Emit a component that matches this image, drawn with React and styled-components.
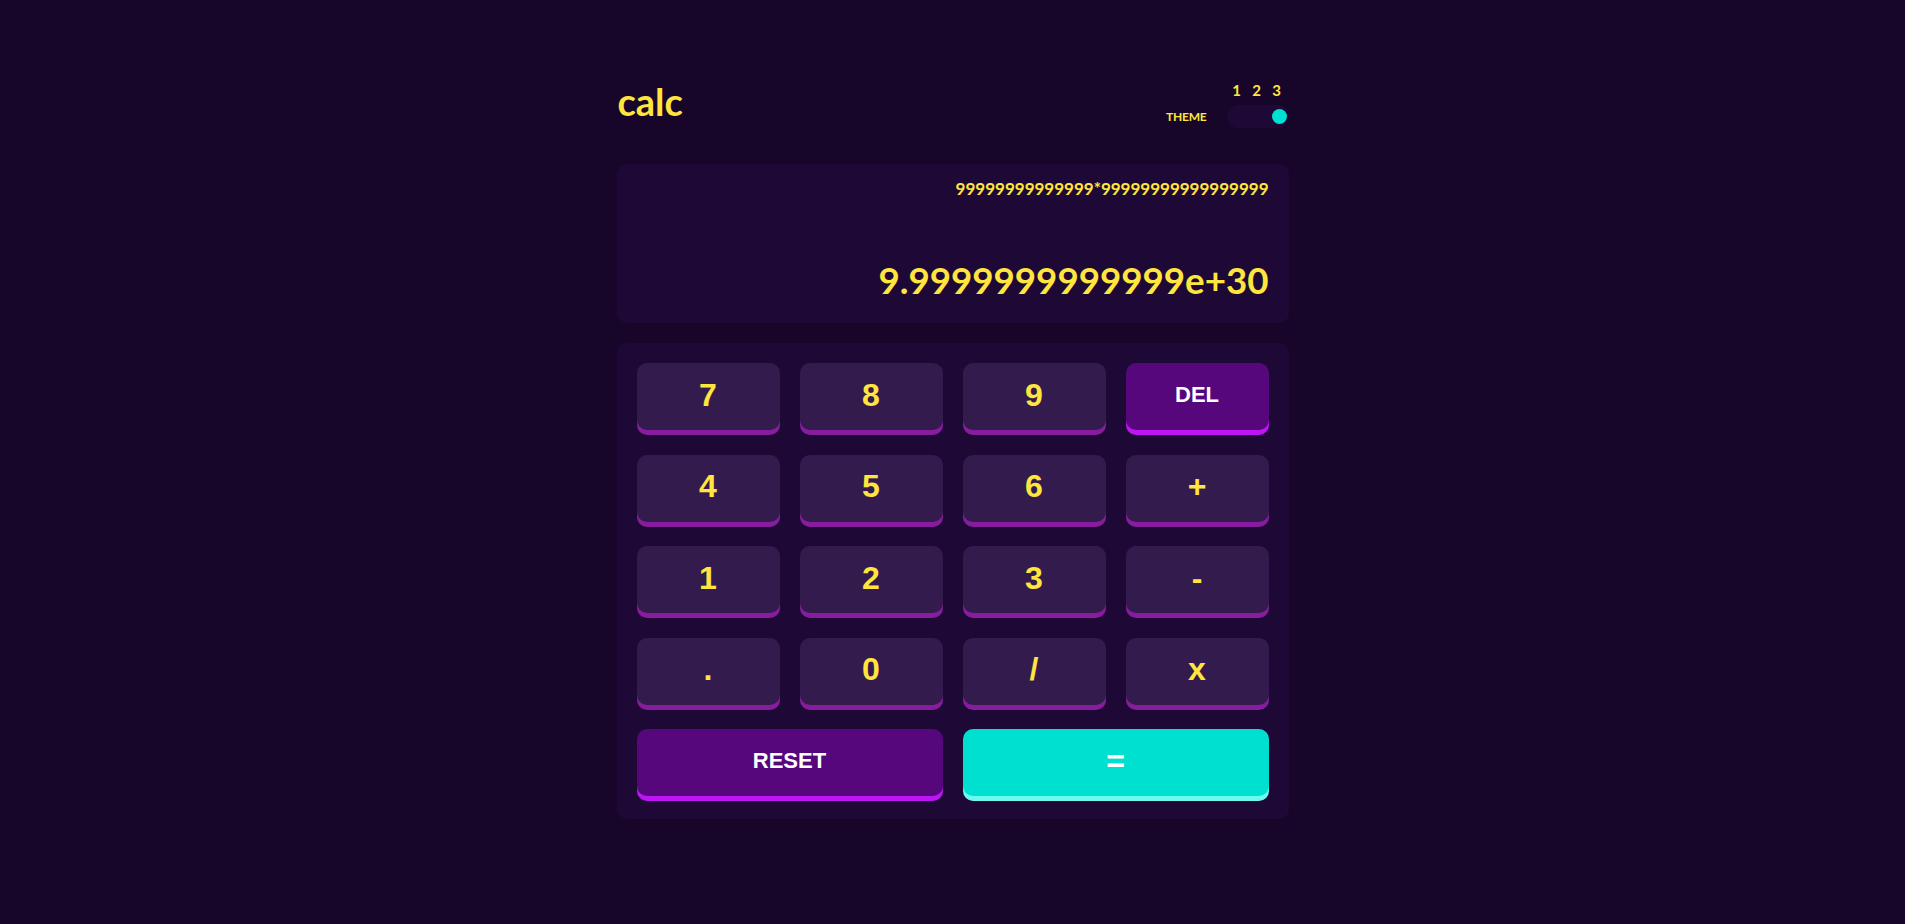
import React, { useState } from 'react';
import styled, { createGlobalStyle } from 'styled-components';

const GlobalStyle = createGlobalStyle`
  html, body {
    margin: 0;
    padding: 0;
    background-color: #17062a;
  }
  body {
    font-family: Lato, "Open Sans", sans-serif;
    color: #ffe53d;
  }
`;

const Container = styled.div`
  width: 672px;
  margin: 0 auto;
  padding-top: 82px;
`;

const Header = styled.header`
  display: flex;
  justify-content: space-between;
  align-items: flex-start;
`;

const Logo = styled.h1`
  margin: 0;
  padding-left: 1px;
  font-size: 38px;
  line-height: 38px;
  font-weight: 700;
  color: #ffe53d;
`;

const ThemeBox = styled.div`
  display: grid;
  grid-template-columns: auto 62px;
  column-gap: 20px;
  row-gap: 7px;
  margin-top: 1px;
`;

const ThemeLabel = styled.div`
  grid-column: 1;
  grid-row: 2;
  align-self: center;
  font-size: 12px;
  font-weight: 700;
  letter-spacing: -0.2px;
  line-height: 1;
  padding-top: 1px;
`;

const Numbers = styled.div`
  grid-column: 2;
  grid-row: 1;
  display: grid;
  grid-template-columns: repeat(3, 1fr);
  padding-right: 2px;
  font-size: 15px;
  font-weight: 700;
  line-height: 15px;
  text-align: center;
`;

const Toggle = styled.div`
  grid-column: 2;
  grid-row: 2;
  height: 23px;
  border-radius: 12px;
  background-color: #1e0936;
  display: flex;
  align-items: center;
  justify-content: ${props => ['flex-start', 'center', 'flex-end'][props.pos]};
  padding: 0 2px 0 4px;
  box-sizing: border-box;
  cursor: pointer;
`;

const Knob = styled.span`
  width: 15px;
  height: 15px;
  border-radius: 50%;
  background-color: #00e0d1;
`;

const Screen = styled.div`
  margin-top: 36px;
  height: 159px;
  box-sizing: border-box;
  padding: 15px 20px 21px;
  border-radius: 10px;
  background-color: #1e0936;
  display: flex;
  flex-direction: column;
  justify-content: space-between;
  align-items: flex-end;
`;

const Expression = styled.div`
  font-size: 17px;
  font-weight: 700;
  line-height: 1.2;
`;

const Result = styled.div`
  font-size: 36.7px;
  font-weight: 700;
  line-height: 1.2;
`;

const Keypad = styled.div`
  margin-top: 20px;
  padding: 20px 20px 23px;
  border-radius: 10px;
  background-color: #1e0936;
  display: grid;
  grid-template-columns: repeat(4, 1fr);
  column-gap: 20px;
  row-gap: 24.5px;
`;

const variants = {
  num: { bg: '#331c4d', shadow: '#881c9e', color: '#ffe53d', size: '32px' },
  del: { bg: '#56077c', shadow: '#be15f4', color: '#ffffff', size: '22px' },
  eq: { bg: '#00e0d1', shadow: '#6cf9f1', color: '#ffffff', size: '32px' },
};

const Key = styled.button`
  grid-column: ${props => props.wide ? 'span 2' : 'auto'};
  height: 67px;
  border: none;
  border-radius: 10px;
  padding: 0 0 3px;
  background-color: ${props => variants[props.kind].bg};
  box-shadow: 0 5px 0 ${props => variants[props.kind].shadow};
  color: ${props => variants[props.kind].color};
  font-family: "Liberation Sans", Arial, sans-serif;
  font-weight: 700;
  font-size: ${props => variants[props.kind].size};
  cursor: pointer;
  &:hover {
    filter: brightness(1.15);
  }
`;

const keys = [
  ['7', 'num'], ['8', 'num'], ['9', 'num'], ['DEL', 'del'],
  ['4', 'num'], ['5', 'num'], ['6', 'num'], ['+', 'num'],
  ['1', 'num'], ['2', 'num'], ['3', 'num'], ['-', 'num'],
  ['.', 'num'], ['0', 'num'], ['/', 'num'], ['x', 'num'],
];

const App = () => {
  const [theme, setTheme] = useState(2);

  return (
    <Container>
      <GlobalStyle />
      <Header>
        <Logo>calc</Logo>
        <ThemeBox>
          <Numbers>
            <span>1</span>
            <span>2</span>
            <span>3</span>
          </Numbers>
          <ThemeLabel>THEME</ThemeLabel>
          <Toggle pos={theme} onClick={() => setTheme((theme + 1) % 3)}>
            <Knob />
          </Toggle>
        </ThemeBox>
      </Header>
      <Screen>
        <Expression>99999999999999*99999999999999999</Expression>
        <Result>9.9999999999999e+30</Result>
      </Screen>
      <Keypad>
        {keys.map(([label, kind]) => (
          <Key key={label} kind={kind}>{label}</Key>
        ))}
        <Key wide kind="del">RESET</Key>
        <Key wide kind="eq">=</Key>
      </Keypad>
    </Container>
  );
};

export default App;
